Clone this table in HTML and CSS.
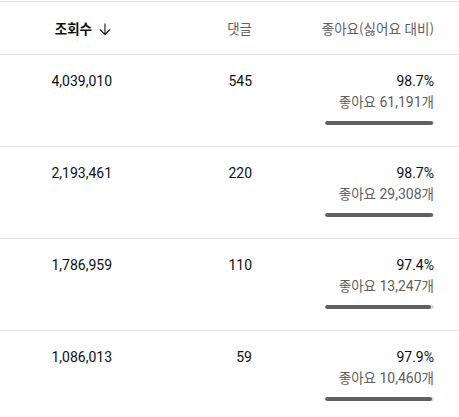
FILE: index.html
```html
<!DOCTYPE html>
<html lang="ko">
<head>
<meta charset="utf-8">
<link rel="stylesheet" href="styles.css">
</head>
<body>
<div class="table">
  <div class="row head">
    <div class="cell sort"><span class="ko">조회수</span>
      <svg class="arrow" width="14" height="14" viewBox="0 0 14 14"><path d="M7 1.5V12.5M1.8 7.3L7 12.5L12.2 7.3" fill="none" stroke="#0f0f0f" stroke-width="1.1"/></svg>
    </div>
    <div class="cell muted"><span class="ko">댓글</span></div>
    <div class="cell muted"><span class="ko">좋아요(싫어요 대비)</span></div>
  </div>
  <div class="row">
    <div class="cell">4,039,010</div>
    <div class="cell">545</div>
    <div class="cell likes">
      <div>98.7%</div>
      <div class="muted"><span class="ko">좋아요</span> 61,191<span class="ko">개</span></div>
      <div class="bar"><div class="fill" style="width:98.7%"></div></div>
    </div>
  </div>
  <div class="row">
    <div class="cell">2,193,461</div>
    <div class="cell">220</div>
    <div class="cell likes">
      <div>98.7%</div>
      <div class="muted"><span class="ko">좋아요</span> 29,308<span class="ko">개</span></div>
      <div class="bar"><div class="fill" style="width:98.7%"></div></div>
    </div>
  </div>
  <div class="row">
    <div class="cell">1,786,959</div>
    <div class="cell">110</div>
    <div class="cell likes">
      <div>97.4%</div>
      <div class="muted"><span class="ko">좋아요</span> 13,247<span class="ko">개</span></div>
      <div class="bar"><div class="fill" style="width:97.4%"></div></div>
    </div>
  </div>
  <div class="row">
    <div class="cell">1,086,013</div>
    <div class="cell">59</div>
    <div class="cell likes">
      <div>97.9%</div>
      <div class="muted"><span class="ko">좋아요</span> 10,460<span class="ko">개</span></div>
      <div class="bar"><div class="fill" style="width:97.9%"></div></div>
    </div>
  </div>
</div>
</body>
</html>
```
FILE: styles.css
```css
html, body {
  margin: 0;
  padding: 0;
  background: #fff;
}
body {
  font-family: Roboto, "Noto Sans CJK KR", sans-serif;
  font-size: 14px;
  line-height: 20px;
  color: #0f0f0f;
  overflow: hidden;
}
.table {
  margin-top: 1px;
  border-top: 1px solid #e5e5e5;
}
.row {
  display: grid;
  grid-template-columns: 112px 140px 182px;
  padding: 16px 25px 0 0;
  height: 75px;
  border-bottom: 1px solid #e5e5e5;
}
.row.head {
  height: 52px;
  padding-top: 0;
  align-items: center;
}
.cell {
  text-align: right;
}
.ko {
  font-family: "Noto Sans CJK KR", sans-serif;
  font-size: 13.5px;
}
.sort {
  font-weight: 700;
  display: flex;
  align-items: center;
  justify-content: flex-end;
  gap: 6px;
}
.arrow {
  display: block;
  margin-top: 1px;
}
.muted {
  color: #606060;
}
.likes {
  display: flex;
  flex-direction: column;
  align-items: flex-end;
}
.bar {
  width: 109px;
  height: 4px;
  border-radius: 2px;
  background: #d9d9d9;
  margin-top: 9px;
  overflow: hidden;
}
.fill {
  height: 100%;
  background: #606060;
  border-radius: 2px;
}
```
